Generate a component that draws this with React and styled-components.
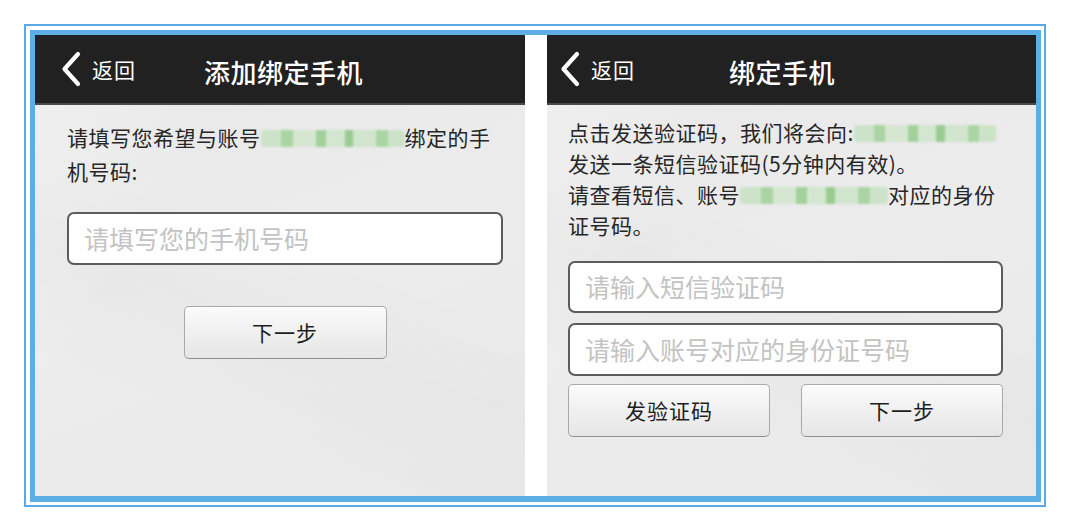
import React from 'react'
import styled, { createGlobalStyle } from 'styled-components'

const GlobalStyle = createGlobalStyle`
  html, body {
    margin: 0;
    padding: 0;
    background: #fff;
  }
  body {
    font-family: "Noto Sans CJK SC", "Noto Sans", "Liberation Sans", sans-serif;
  }
`

const Page = styled.div`
  width: 1070px;
  height: 526px;
  padding: 24px 0 0 24px;
  box-sizing: border-box;
`

const OuterFrame = styled.div`
  width: 1022px;
  height: 483px;
  box-sizing: border-box;
  border: 2px solid #5ba9e4;
  padding: 4px 3px 3px 4px;
  background: #fff;
`

const InnerFrame = styled.div`
  height: 100%;
  box-sizing: border-box;
  border: 5px solid #5eaee6;
  border-bottom-width: 6px;
  display: flex;
  gap: 22px;
  background: #fff;
`

const Screen = styled.section`
  width: ${p => p.width}px;
  display: flex;
  flex-direction: column;
  background:
    linear-gradient(120deg, rgba(255,255,255,0.3) 0%, rgba(255,255,255,0) 30%),
    linear-gradient(200deg, rgba(0,0,0,0) 45%, rgba(0,0,0,0.015) 60%, rgba(0,0,0,0) 80%),
    linear-gradient(160deg, #e8e8e8 0%, #ececec 50%, #e9e9e9 100%);
`

const Header = styled.header`
  height: 68px;
  flex-shrink: 0;
  display: flex;
  align-items: center;
  padding-left: ${p => p.inset}px;
  background: #212121;
  border-bottom: 2px solid #4a4a4a;
  color: #fff;
`

const Back = styled.div`
  display: flex;
  align-items: center;
  gap: 10px;
  font-size: 21px;
  letter-spacing: 1px;
`

const Title = styled.h1`
  margin: 4px 0 0 ${p => p.offset}px;
  font-size: 26px;
  font-weight: 500;
  letter-spacing: 0.5px;
`

const Body = styled.div`
  flex: 1;
  display: flex;
  flex-direction: column;
  padding: ${p => p.top}px 21px 0 ${p => p.left}px;
`

const Note = styled.p`
  margin: 0;
  font-size: 21px;
  letter-spacing: 0.5px;
  line-height: ${p => p.lh}px;
  color: #262626;
  white-space: nowrap;
`

const Masked = styled.span`
  display: inline-block;
  width: ${p => p.w}px;
  height: 17px;
  vertical-align: -1px;
  background:
    linear-gradient(90deg,
      rgba(185,222,178,0.6) 0 14%, rgba(150,205,140,0.75) 14% 22%,
      rgba(195,228,188,0.55) 22% 38%, rgba(145,202,135,0.8) 38% 45%,
      rgba(192,226,185,0.55) 45% 58%, rgba(140,198,130,0.85) 58% 64%,
      rgba(190,225,182,0.55) 64% 80%, rgba(150,205,140,0.75) 80% 88%,
      rgba(185,222,178,0.6) 88% 100%);
  filter: blur(1.2px);
  border-radius: 4px;
`

const Field = styled.input`
  width: ${p => p.w}px;
  height: ${p => p.h}px;
  box-sizing: border-box;
  margin-top: ${p => p.mt}px;
  padding: 0 0 2px 15px;
  border: 2px solid #5c5c5c;
  border-radius: 7px;
  background: #fff;
  font-family: inherit;
  font-size: 25px;
  color: #333;
  outline: none;
  &::placeholder {
    color: #c3c3c3;
  }
`

const ButtonRow = styled.div`
  display: flex;
  justify-content: ${p => p.justify || 'space-between'};
  width: ${p => p.w}px;
  margin-top: ${p => p.mt}px;
`

const Btn = styled.button`
  width: ${p => p.w}px;
  height: 53px;
  box-sizing: border-box;
  border: 1px solid #a9a9a9;
  border-bottom-color: #8f8f8f;
  border-radius: 5px;
  background: linear-gradient(180deg, #fbfbfb 0%, #f1f1f1 45%, #e6e6e6 100%);
  box-shadow: inset 0 1px 0 #fff;
  font-family: inherit;
  font-size: 21px;
  color: #1e1e1e;
  letter-spacing: 1px;
  padding: 0 0 2px;
`

const Chevron = () => (
  <svg width="22" height="36" viewBox="0 0 22 36">
    <path d="M18 3 L4.5 18 L18 33" fill="none" stroke="#fff" strokeWidth="4.2" strokeLinecap="round" strokeLinejoin="round" />
  </svg>
)

const ScreenHeader = ({ inset, offset, title }) => (
  <Header inset={inset}>
    <Back>
      <Chevron />
      <span>返回</span>
    </Back>
    <Title offset={offset}>{title}</Title>
  </Header>
)

const App = () => (
  <Page>
    <GlobalStyle />
    <OuterFrame>
      <InnerFrame>
        <Screen width={490}>
          <ScreenHeader inset={25} offset={68} title="添加绑定手机" />
          <Body top={15} left={32}>
            <Note lh={34}>
              请填写您希望与账号<Masked w={144} />绑定的手
              <br />
              机号码:
            </Note>
            <Field w={436} h={53} mt={24} placeholder="请填写您的手机号码" />
            <ButtonRow w={436} mt={41} justify="center">
              <Btn w={203}>下一步</Btn>
            </ButtonRow>
          </Body>
        </Screen>
        <Screen width={489}>
          <ScreenHeader inset={12} offset={94} title="绑定手机" />
          <Body top={12} left={21}>
            <Note lh={31}>
              点击发送验证码，我们将会向:<Masked w={142} />
              <br />
              发送一条短信验证码(5分钟内有效)。
              <br />
              请查看短信、账号<Masked w={148} />对应的身份
              <br />
              证号码。
            </Note>
            <Field w={435} h={52} mt={20} placeholder="请输入短信验证码" />
            <Field w={435} h={53} mt={10} placeholder="请输入账号对应的身份证号码" />
            <ButtonRow w={435} mt={8}>
              <Btn w={202}>发验证码</Btn>
              <Btn w={202}>下一步</Btn>
            </ButtonRow>
          </Body>
        </Screen>
      </InnerFrame>
    </OuterFrame>
  </Page>
)

export default App
